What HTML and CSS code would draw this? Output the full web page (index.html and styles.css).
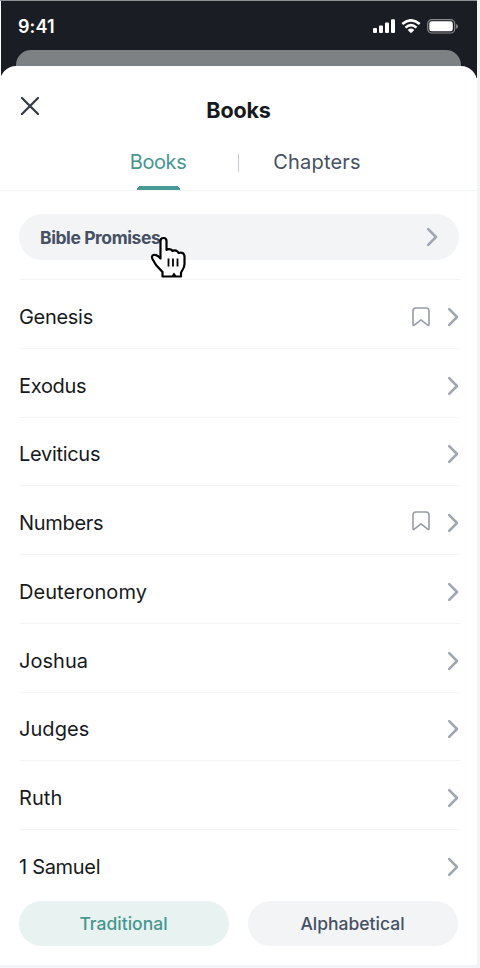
FILE: index.html
```html
<!DOCTYPE html>
<html lang="en">
<head>
<meta charset="utf-8">
<title>Books</title>
<link rel="stylesheet" href="styles.css">
</head>
<body>
<svg class="defs" aria-hidden="true">
  <symbol id="chevron" viewBox="0 0 12 20"><path d="M2.200 2.200 10 10 2.200 17.800" fill="none" stroke="currentColor" stroke-width="2.600" stroke-linecap="round" stroke-linejoin="round"/></symbol>
  <symbol id="bookmark" viewBox="0 0 18 20"><path d="M4 1h10Q17 1 17 4V17.500q0 1.600-1.300.6L9 12.800 2.300 18.100Q1 19.100 1 17.500V4Q1 1 4 1Z" fill="none" stroke="currentColor" stroke-width="1.600" stroke-linejoin="round"/></symbol>
</svg>
<div class="screen">
  <header class="status">
    <span class="time">9:41</span>
    <div class="indicators">
      <svg width="23" height="15" viewBox="0 0 23 15" fill="#fff"><rect x="0" y="9" width="4" height="5" rx="1"/><rect x="6" y="6.500" width="4" height="7.500" rx="1"/><rect x="12" y="3.500" width="4" height="10.500" rx="1"/><rect x="18" y="0.300" width="4" height="13.700" rx="1"/></svg>
      <svg class="wifi" width="20" height="15" viewBox="0 0 20 15"><path d="M1.300 5.100Q10-2.500 18.700 5.100M4.500 8.600Q10 3.600 15.500 8.600" fill="none" stroke="#fff" stroke-width="2.600"/><path d="M6.700 10.900Q10 8 13.300 10.900L10 14.300Z" fill="#fff"/></svg>
      <svg width="31" height="15" viewBox="0 0 31 15"><rect x=".7" y=".7" width="27" height="13.300" rx="4" fill="none" stroke="#85888b" stroke-width="1.200"/><rect x="2.300" y="2.300" width="23.500" height="10" rx="2.400" fill="#fff"/><path d="M29 5q2 .7 2 2.400T29 9.800Z" fill="#85888b"/></svg>
    </div>
  </header>
  <div class="stage">
    <div class="back-sheet"></div>
    <main class="sheet">
      <div class="heading">
        <svg class="close" width="20" height="20" viewBox="0 0 20 20"><path d="M2 2 18 18M18 2 2 18" stroke="#353b46" stroke-width="2.300" stroke-linecap="round"/></svg>
        <h1>Books</h1>
      </div>
      <nav class="tabs">
        <a class="tab active">Books</a>
        <i class="divider"></i>
        <a class="tab chapters">Chapters</a>
      </nav>
      <div class="promises"><span>Bible Promises</span><svg class="chevron"><use href="#chevron"/></svg>
        <svg class="cursor" width="37" height="43" viewBox="0 0 37 43"><path d="M10.500 22.500V5Q10.500 2 13.500 2T16.500 5V14Q18 12.500 21 13.500L22.500 15Q25 13.500 27.500 15.500L28.500 17Q34.500 15.500 34.500 21V28Q34.500 31 32.500 34L31 36.500V40.500H12.500V36L6 29 2.500 23Q1 20 3.500 19 6.500 18 10.500 22.500Z" fill="#fff" stroke="#000" stroke-width="2.200" stroke-linejoin="round"/><path d="M18.500 22.500V30.500M23 22.500V30.500M27.500 22.500V30.500" stroke="#000" stroke-width="1.800"/><path d="M21.500 40 24 36.500 26.500 40Z"/></svg>
      </div>
      <ul class="books">
        <li><span>Genesis</span><svg class="bookmark"><use href="#bookmark"/></svg><svg class="chevron"><use href="#chevron"/></svg></li>
        <li><span>Exodus</span><svg class="chevron"><use href="#chevron"/></svg></li>
        <li><span>Leviticus</span><svg class="chevron"><use href="#chevron"/></svg></li>
        <li><span>Numbers</span><svg class="bookmark raised"><use href="#bookmark"/></svg><svg class="chevron"><use href="#chevron"/></svg></li>
        <li><span class="wide">Deuteronomy</span><svg class="chevron"><use href="#chevron"/></svg></li>
        <li><span class="wide">Joshua</span><svg class="chevron"><use href="#chevron"/></svg></li>
        <li><span class="wide">Judges</span><svg class="chevron"><use href="#chevron"/></svg></li>
        <li><span class="wide">Ruth</span><svg class="chevron"><use href="#chevron"/></svg></li>
        <li><span>1 Samuel</span><svg class="chevron"><use href="#chevron"/></svg></li>
      </ul>
      <footer class="order">
        <button class="selected">Traditional</button>
        <button>Alphabetical</button>
      </footer>
    </main>
  </div>
</div>
</body>
</html>
```

FILE: styles.css
```css
* { box-sizing: border-box; }
body { margin: 0; background: #f3f4f5; font-family: Inter, "Liberation Sans", sans-serif; color: #17191d; }
.defs { position: absolute; width: 0; height: 0; }
.screen { width: 477px; height: 965px; background: #fff; overflow: hidden; border-top: 1px solid #8d9295; }
.status { height: 49px; margin-left: 1px; background: #1a1d24; display: flex; justify-content: space-between; align-items: flex-start; padding: 14px 19px 0 17px; }
.time { color: #fff; font-size: 18px; line-height: 24px; font-weight: 600; letter-spacing: .1px; }
.indicators { display: flex; padding-top: 4px; }
.wifi { margin: 0 6px 0 5px; }
.stage { margin-left: 1px; background: linear-gradient(#1a1d24 28px, #fff 28px); }
.back-sheet { height: 16px; margin: 0 16px 0 15px; background: #7e8183; border-radius: 15px 15px 0 0; }
.sheet { height: 900px; margin-left: -1px; background: #fff; border-radius: 16px 16px 0 0; }
.heading { height: 75px; padding: 30px 20px 0; display: grid; grid-template-columns: 20px 1fr 20px; }
h1 { margin: 0; text-align: center; font-size: 21.500px; line-height: 29px; font-weight: 700; letter-spacing: -.15px; }
.tabs { height: 50px; border-bottom: 1px solid #f2f3f5; display: grid; grid-template-columns: 101px 1px 156px; padding-left: 137px; color: #465063; font-size: 20px; }
.tab { display: flex; justify-content: center; padding-top: 6px; line-height: 30px; }
.active { width: 43px; color: #47968f; height: 49px; white-space: nowrap; letter-spacing: -.4px; text-indent: -1px; background: radial-gradient(circle at 4px 4px, #479a96 4px, transparent 4px) 0 45px / 4px 4px no-repeat, radial-gradient(circle at 0 4px, #479a96 4px, transparent 4px) 39px 45px / 4px 4px no-repeat, linear-gradient(#479a96, #479a96) 4px 45px / 35px 4px no-repeat; }
.chapters { letter-spacing: .2px; }
.divider { height: 18px; background: #c5c8cd; margin-top: 13px; }
.promises { position: relative; height: 46px; margin: 23px 18px 0 19px; padding: 0 21px; background: #f2f4f6; border-radius: 23px; display: flex; align-items: center; justify-content: space-between; font-size: 17.500px; font-weight: 700; letter-spacing: -.42px; color: #465063; }
.cursor { position: absolute; left: 131px; top: 22px; }
.chevron { width: 12px; height: 20px; color: #a0a6b2; flex: none; }
.books { list-style: none; margin: 19px 17px 0 19px; padding: 0; border-top: 1px solid #f3f4f5; }
.books li { height: 68.750px; padding: 6px 1px 0 0; border-bottom: 1px solid #f3f4f5; display: flex; align-items: center; font-size: 20px; line-height: 28px; letter-spacing: -.3px; }
.books li:last-child { height: 69px; padding-top: 5px; border: 0; }
.books span { margin-right: auto; }
.books .wide { letter-spacing: .05px; }
.bookmark { width: 18px; height: 20px; color: #969ca8; margin: 0 17px 0 0; }
.raised { margin-bottom: 4px; }
.order { display: grid; grid-template-columns: 210px 210px; gap: 19px; margin: 2px 0 0 19px; }
button { height: 45px; padding: 0 1px 0 0; border: 0; border-radius: 23px; background: #f2f4f6; color: #465063; font: 500 17.500px Inter, sans-serif; }
.order .selected { background: #e8f2f1; color: #47968f; }
```
